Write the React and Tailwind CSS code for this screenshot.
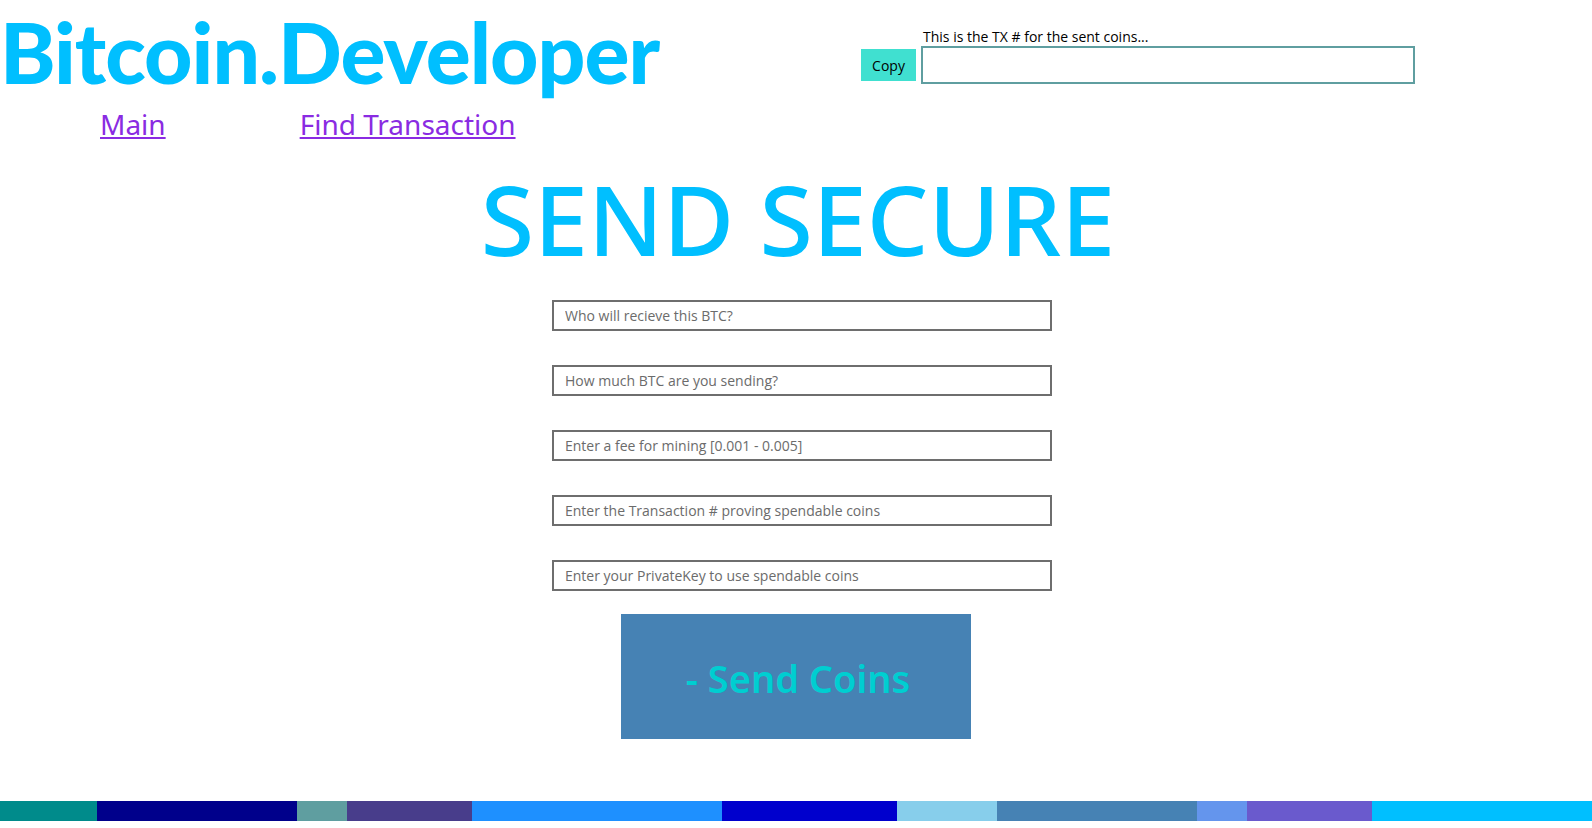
import React from "react";

const segs = [
  ["w-[97px]", "bg-[#008B8B]"],
  ["w-[200px]", "bg-[#00008B]"],
  ["w-[50px]", "bg-[#5F9EA0]"],
  ["w-[125px]", "bg-[#483D8B]"],
  ["w-[250px]", "bg-[#1E90FF]"],
  ["w-[175px]", "bg-[#0000CD]"],
  ["w-[100px]", "bg-[#87CEEB]"],
  ["w-[200px]", "bg-[#4682B4]"],
  ["w-[50px]", "bg-[#6495ED]"],
  ["w-[125px]", "bg-[#6A5ACD]"],
  ["flex-1", "bg-[#00BFFF]"],
];

const fields = [
  "Who will recieve this BTC?",
  "How much BTC are you sending?",
  "Enter a fee for mining [0.001 - 0.005]",
  "Enter the Transaction # proving spendable coins",
  "Enter your PrivateKey to use spendable coins",
];

export default function App() {
  return (
    <div className="w-[1592px] h-[828px] bg-white overflow-hidden flex flex-col font-['Open_Sans',sans-serif]">
      <div className="flex items-start h-[100px]">
        <h1 className="text-[#00BFFF] font-['Lato',sans-serif] font-black text-[84px] leading-none tracking-[-1px] mt-[10px] w-[861px] whitespace-nowrap">
          Bitcoin.Developer
        </h1>
        <div className="flex flex-col mt-[27px]">
          <div className="pl-[62px] text-[14px] leading-[19px] text-black">
            This is the TX # for the sent coins...
          </div>
          <div className="flex items-center">
            <button className="w-[55px] h-[32px] bg-[#40E0D0] text-[14px] text-black mr-[5px]">
              Copy
            </button>
            <input className="w-[494px] h-[38px] border-2 border-[#5F9EA0] outline-none" />
          </div>
        </div>
      </div>
      <div className="flex h-[50px] items-start pt-[4px] text-[28px] leading-[40px] font-['Noto_Sans',sans-serif]">
        <a href="#" className="ml-[100px] text-[#8A2BE2] underline">Main</a>
        <a href="#" className="ml-[134px] text-[#8A2BE2] underline">Find Transaction</a>
      </div>
      <div className="text-center text-[#00BFFF] text-[97px] leading-[130px] mt-[3px] -mb-[3px] pl-[4px] font-['Noto_Sans',sans-serif] font-medium">
        SEND SECURE
      </div>
      <div className="flex flex-col items-center pl-[12px] mt-[20px] gap-[34px]">
        {fields.map((f) => (
          <input
            key={f}
            placeholder={f}
            className="w-[500px] h-[31px] border-2 border-[#6e6e6e] px-[11px] text-[14px] placeholder:text-[#6b6b6b] outline-none"
          />
        ))}
      </div>
      <div className="flex justify-center mt-[23px]">
        <button className="w-[350px] h-[125px] bg-[#4682B4] text-[#00CED1] text-[38px] pt-[3px] pl-[4px] font-semibold font-['Noto_Sans',sans-serif]">
          - Send Coins
        </button>
      </div>
      <div className="flex h-[20px] mt-[62px]">
        {segs.map(([w, c], i) => (
          <div key={i} className={`${w} ${c} h-full`} />
        ))}
      </div>
    </div>
  );
}
